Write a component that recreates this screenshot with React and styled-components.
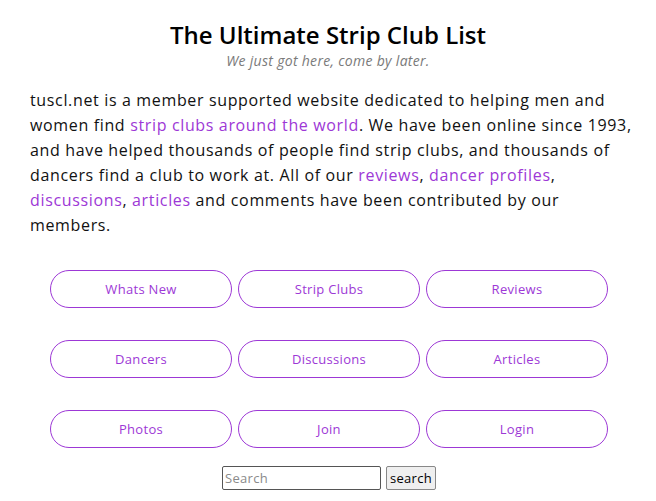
import React from 'react'
import styled, { createGlobalStyle } from 'styled-components'

const GlobalStyle = createGlobalStyle`
  body {
    margin: 0;
    background: #fff;
    font-family: "Open Sans", "DejaVu Sans", sans-serif;
    color: #111;
  }
`

const purple = '#9d38d6'

const Page = styled.div`
  padding: 20px 18px 0 30px;
`

const Title = styled.h1`
  margin: 0;
  padding-right: 12px;
  text-align: center;
  font-size: 24px;
  font-weight: 600;
  line-height: 30px;
  color: #000;
`

const Tagline = styled.div`
  margin-top: 2px;
  padding-right: 12px;
  text-align: center;
  font-size: 14px;
  font-style: italic;
  color: #7a7a7a;
  line-height: 18px;
  letter-spacing: 0.3px;
`

const Intro = styled.p`
  margin: 18px 0 0;
  font-size: 16px;
  line-height: 25px;
  letter-spacing: 0.65px;
  color: #111;
`

const TextLink = styled.a`
  color: ${purple};
  text-decoration: none;
`

const ButtonGrid = styled.div`
  display: grid;
  grid-template-columns: repeat(3, 182px);
  column-gap: 6px;
  row-gap: 32px;
  justify-content: center;
  margin-top: 32px;
  padding-right: 10px;
`

const NavButton = styled.a`
  display: flex;
  align-items: center;
  justify-content: center;
  height: 36px;
  border: 1px solid ${purple};
  border-radius: 19px;
  color: ${purple};
  font-size: 13px;
  letter-spacing: 0.3px;
  text-decoration: none;
`

const SearchRow = styled.form`
  display: flex;
  justify-content: center;
  gap: 5px;
  margin-top: 18px;
  padding-right: 10px;
`

const SearchInput = styled.input`
  width: 159px;
  height: 24px;
  box-sizing: border-box;
  border: 1px solid #555;
  border-radius: 2px;
  padding: 0 2px;
  font-family: inherit;
  font-size: 13px;
  letter-spacing: 0.3px;
  &::placeholder {
    color: #8a8a8a;
  }
`

const SearchButton = styled.button`
  width: 50px;
  height: 24px;
  box-sizing: border-box;
  border: 1px solid #888;
  border-radius: 2px;
  background: #efefef;
  padding: 0;
  font-family: inherit;
  font-size: 13px;
  letter-spacing: 0.3px;
  color: #000;
`

const links = [
  'Whats New',
  'Strip Clubs',
  'Reviews',
  'Dancers',
  'Discussions',
  'Articles',
  'Photos',
  'Join',
  'Login',
]

export default function App() {
  return (
    <Page>
      <GlobalStyle />
      <Title>The Ultimate Strip Club List</Title>
      <Tagline>We just got here, come by later.</Tagline>
      <Intro>
        tuscl.net is a member supported website dedicated to helping men and women find{' '}
        <TextLink href="#">strip clubs around the world</TextLink>. We have been online since
        1993, and have helped thousands of people find strip clubs, and thousands of dancers
        find a club to work at. All of our <TextLink href="#">reviews</TextLink>,{' '}
        <TextLink href="#">dancer profiles</TextLink>, <TextLink href="#">discussions</TextLink>,{' '}
        <TextLink href="#">articles</TextLink> and comments have been contributed by our members.
      </Intro>
      <ButtonGrid>
        {links.map((label) => (
          <NavButton key={label} href="#">
            {label}
          </NavButton>
        ))}
      </ButtonGrid>
      <SearchRow onSubmit={(e) => e.preventDefault()}>
        <SearchInput placeholder="Search" />
        <SearchButton type="submit">search</SearchButton>
      </SearchRow>
    </Page>
  )
}
